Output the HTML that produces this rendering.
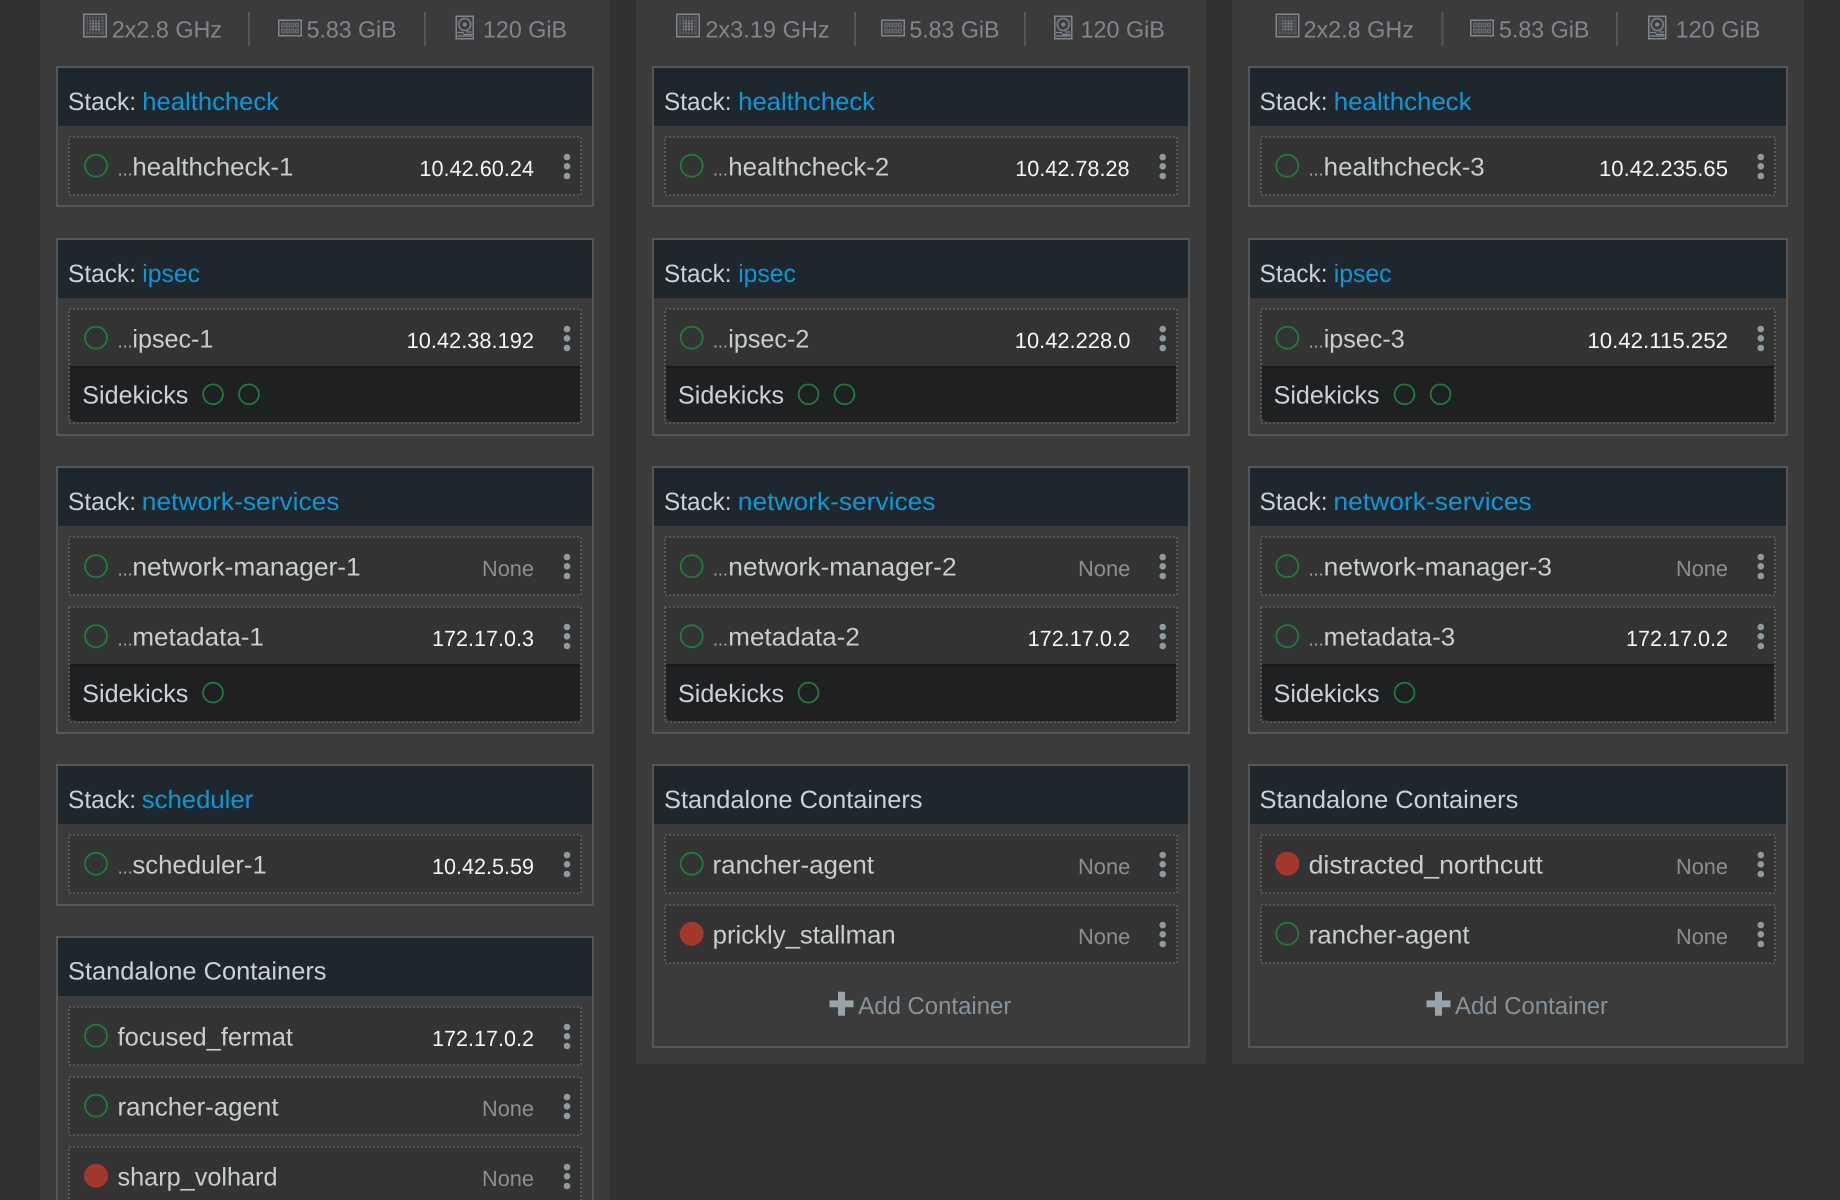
<!DOCTYPE html>
<html lang="en">
<head>
<meta charset="utf-8">
<title>Hosts</title>
<style>
html,body{margin:0;padding:0;background:#313131;width:1840px;height:1200px;overflow:hidden}
svg{display:block;position:absolute;left:0;top:0}
text{font-family:"Liberation Sans",sans-serif;white-space:pre;text-rendering:geometricPrecision}
.t{font-size:25px;fill:#ccd1d3}
.l{font-size:25px;fill:#0a98d8}
.n{font-size:25.5px;fill:#c8cdd0}
.d{font-size:18px;fill:#a9adaf}
.i{font-size:22px;fill:#f4f5f5}
.o{font-size:22px;fill:#8c8e8f}
.s{font-size:23.5px;fill:#80868f}
.a{font-size:24.5px;fill:#87929a}
.box{fill:none;stroke:#565656;stroke-width:2}
.row{fill:#333;stroke:#545454;stroke-width:2;stroke-dasharray:2 2}
.c{fill:none;stroke:#1c7c3a;stroke-width:1.8}
.r{fill:#a3392c}
.h{fill:#1e272e}
.k{fill:#1f2022}
.b{fill:#191a1b}
.v{fill:#565656}
.p{fill:#98a4aa}
</style>
</head>
<body>
<svg width="1840" height="1200" viewBox="0 0 1840 1200" xmlns="http://www.w3.org/2000/svg">
<defs>
<g id="cpu">
<rect x=".75" y=".75" width="22.5" height="22.5" fill="#3f3f3f" stroke="#7f858c" stroke-width="1.5"/>
<rect x="3" y="3" width="18" height="18" fill="#56585b"/>
<rect x="7" y="7" width="10" height="10" fill="#7c8085"/>
<path d="M3 5.5h18M3 8.5h18M3 11.5h18M3 14.5h18M3 17.5h18M5.5 3v18M8.5 3v18M11.5 3v18M14.5 3v18M17.5 3v18" stroke="#3d3e40" stroke-width=".8" fill="none"/>
</g>
<g id="ram">
<rect x=".75" y=".75" width="22.5" height="15.5" fill="#3f3f3f" stroke="#7f858c" stroke-width="1.5"/>
<path d="M3.5 3.5h3.5v4h-3.5zM8.5 3.5h3v4h-3zM13 3.5h3v4h-3zM17.5 3.5h3v4h-3zM3.5 9.5h3.5v4h-3.5zM8.5 9.5h3v4h-3zM13 9.5h3v4h-3zM17.5 9.5h3v4h-3z" fill="#505254" stroke="#6f7379" stroke-width=".8"/>
</g>
<g id="hdd">
<rect x=".75" y=".75" width="17" height="22.5" fill="#3f3f3f" stroke="#7f858c" stroke-width="1.5"/>
<circle cx="9.25" cy="9" r="6" fill="none" stroke="#7f858c" stroke-width="1.4"/>
<circle cx="9.25" cy="9" r="2" fill="#7f858c"/>
<path d="M2 17h5l2 2h7.5M2 20.5h14.5M11 16.5h5" fill="none" stroke="#7f858c" stroke-width="1.2"/>
</g>
<g id="m" fill="#8f9aa0">
<circle cx="0" cy="21" r="3.3"/><circle cx="0" cy="30.3" r="3.3"/><circle cx="0" cy="40" r="3.3"/>
</g>
<path id="plus" d="M8.5 0h7v8.7h8.5v6.8h-8.5v8.5h-7v-8.5h-8.5v-6.8h8.5z" class="p"/>
</defs>

<!-- panels -->
<rect x="40" y="-5" width="570" height="1215" fill="#3b3b3b"/>
<rect x="636" y="-5" width="570" height="1069" rx="3" fill="#3b3b3b"/>
<rect x="1232" y="-5" width="572" height="1069" rx="3" fill="#3b3b3b"/>

<!-- ========== COLUMN 1 ========== -->
<use href="#cpu" x="83" y="13.5"/>
<text class="s" x="111.7" y="37.5" textLength="110.4" lengthAdjust="spacingAndGlyphs">2x2.8 GHz</text>
<rect class="v" x="248" y="12" width="2" height="34"/>
<use href="#ram" x="278" y="19.5"/>
<text class="s" x="306.6" y="37.5" textLength="90" lengthAdjust="spacingAndGlyphs">5.83 GiB</text>
<rect class="v" x="424" y="12" width="2" height="34"/>
<use href="#hdd" x="455.5" y="15.5"/>
<text class="s" x="483" y="37.5" textLength="84" lengthAdjust="spacingAndGlyphs">120 GiB</text>

<!-- healthcheck -->
<rect class="box" x="57" y="67" width="536" height="139"/>
<rect class="h" x="58" y="68" width="534" height="58"/>
<text class="t" x="68" y="110" textLength="68" lengthAdjust="spacingAndGlyphs">Stack:</text>
<text class="l" x="142.3" y="110" textLength="136.7" lengthAdjust="spacingAndGlyphs">healthcheck</text>
<rect class="row" x="69" y="137" width="512" height="58"/>
<circle class="c" cx="96" cy="165.7" r="11"/>
<text class="d" x="117.6" y="175.7" textLength="15" lengthAdjust="spacingAndGlyphs">...</text>
<text class="n" x="132.4" y="175.7" textLength="161" lengthAdjust="spacingAndGlyphs">healthcheck-1</text>
<text class="i" x="419.4" y="176" textLength="114.6" lengthAdjust="spacingAndGlyphs">10.42.60.24</text>
<use href="#m" x="567" y="136"/>

<!-- ipsec -->
<rect class="box" x="57" y="239" width="536" height="196"/>
<rect class="h" x="58" y="240" width="534" height="58"/>
<text class="t" x="68" y="282" textLength="68" lengthAdjust="spacingAndGlyphs">Stack:</text>
<text class="l" x="142.3" y="282" textLength="57.7" lengthAdjust="spacingAndGlyphs">ipsec</text>
<rect class="row" x="69" y="309" width="512" height="114"/>
<circle class="c" cx="96" cy="337.7" r="11"/>
<text class="d" x="117.6" y="347.7" textLength="15" lengthAdjust="spacingAndGlyphs">...</text>
<text class="n" x="132.4" y="347.7" textLength="81" lengthAdjust="spacingAndGlyphs">ipsec-1</text>
<text class="i" x="406.6" y="348" textLength="127.4" lengthAdjust="spacingAndGlyphs">10.42.38.192</text>
<use href="#m" x="567" y="308"/>
<path class="k" d="M70 366H580V422H78Q70 422 70 414Z"/>
<rect class="b" x="70" y="366" width="510" height="2"/>
<text class="t" x="82.3" y="403.6" textLength="106" lengthAdjust="spacingAndGlyphs">Sidekicks</text>
<circle class="c" cx="213" cy="394.3" r="9.9"/>
<circle class="c" cx="249" cy="394.3" r="9.9"/>

<!-- network-services -->
<rect class="box" x="57" y="467" width="536" height="266"/>
<rect class="h" x="58" y="468" width="534" height="58"/>
<text class="t" x="68" y="510" textLength="68" lengthAdjust="spacingAndGlyphs">Stack:</text>
<text class="l" x="141.8" y="510" textLength="197.7" lengthAdjust="spacingAndGlyphs">network-services</text>
<rect class="row" x="69" y="537" width="512" height="58"/>
<circle class="c" cx="96" cy="566.2" r="11"/>
<text class="d" x="117.6" y="575.7" textLength="15" lengthAdjust="spacingAndGlyphs">...</text>
<text class="n" x="132.4" y="575.7" textLength="228.3" lengthAdjust="spacingAndGlyphs">network-manager-1</text>
<text class="o" x="482" y="576" textLength="52" lengthAdjust="spacingAndGlyphs">None</text>
<use href="#m" x="567" y="536"/>
<rect class="row" x="69" y="607" width="512" height="115"/>
<circle class="c" cx="96" cy="636.2" r="11"/>
<text class="d" x="117.6" y="645.7" textLength="15" lengthAdjust="spacingAndGlyphs">...</text>
<text class="n" x="132.4" y="645.7" textLength="131.5" lengthAdjust="spacingAndGlyphs">metadata-1</text>
<text class="i" x="432" y="646" textLength="102" lengthAdjust="spacingAndGlyphs">172.17.0.3</text>
<use href="#m" x="567" y="606"/>
<path class="k" d="M70 664H580V721H78Q70 721 70 713Z"/>
<rect class="b" x="70" y="664" width="510" height="2"/>
<text class="t" x="82.3" y="702" textLength="106" lengthAdjust="spacingAndGlyphs">Sidekicks</text>
<circle class="c" cx="213" cy="692.6" r="9.9"/>

<!-- scheduler -->
<rect class="box" x="57" y="765" width="536" height="140"/>
<rect class="h" x="58" y="766" width="534" height="58"/>
<text class="t" x="68" y="808" textLength="68" lengthAdjust="spacingAndGlyphs">Stack:</text>
<text class="l" x="141.8" y="808" textLength="111.4" lengthAdjust="spacingAndGlyphs">scheduler</text>
<rect class="row" x="69" y="835" width="512" height="58"/>
<circle class="c" cx="96" cy="863.7" r="11"/>
<text class="d" x="117.6" y="873.7" textLength="15" lengthAdjust="spacingAndGlyphs">...</text>
<text class="n" x="132.4" y="873.7" textLength="134.4" lengthAdjust="spacingAndGlyphs">scheduler-1</text>
<text class="i" x="432" y="874" textLength="102" lengthAdjust="spacingAndGlyphs">10.42.5.59</text>
<use href="#m" x="567" y="834"/>

<!-- standalone col 1 -->
<rect class="box" x="57" y="937" width="536" height="400"/>
<rect class="h" x="58" y="938" width="534" height="58"/>
<text class="t" x="68" y="979.3" textLength="258.5" lengthAdjust="spacingAndGlyphs">Standalone Containers</text>
<rect class="row" x="69" y="1007" width="512" height="58"/>
<circle class="c" cx="96" cy="1035.7" r="11"/>
<text class="n" x="117.5" y="1045.7" textLength="175.5" lengthAdjust="spacingAndGlyphs">focused_fermat</text>
<text class="i" x="432" y="1046" textLength="102" lengthAdjust="spacingAndGlyphs">172.17.0.2</text>
<use href="#m" x="567" y="1006"/>
<rect class="row" x="69" y="1077" width="512" height="58"/>
<circle class="c" cx="96" cy="1105.7" r="11"/>
<text class="n" x="117.5" y="1115.7" textLength="161" lengthAdjust="spacingAndGlyphs">rancher-agent</text>
<text class="o" x="482" y="1116" textLength="52" lengthAdjust="spacingAndGlyphs">None</text>
<use href="#m" x="567" y="1076"/>
<rect class="row" x="69" y="1147" width="512" height="100"/>
<circle class="r" cx="96" cy="1175.7" r="12"/>
<text class="n" x="117.5" y="1185.7" textLength="160" lengthAdjust="spacingAndGlyphs">sharp_volhard</text>
<text class="o" x="482" y="1186" textLength="52" lengthAdjust="spacingAndGlyphs">None</text>
<use href="#m" x="567" y="1146"/>

<!-- ========== COLUMN 2 ========== -->
<use href="#cpu" x="676" y="13.5"/>
<text class="s" x="705.3" y="37.5" textLength="124.4" lengthAdjust="spacingAndGlyphs">2x3.19 GHz</text>
<rect class="v" x="854" y="12" width="2" height="34"/>
<use href="#ram" x="881" y="19.5"/>
<text class="s" x="909.4" y="37.5" textLength="90" lengthAdjust="spacingAndGlyphs">5.83 GiB</text>
<rect class="v" x="1024" y="12" width="2" height="34"/>
<use href="#hdd" x="1054" y="15.5"/>
<text class="s" x="1080.5" y="37.5" textLength="84.4" lengthAdjust="spacingAndGlyphs">120 GiB</text>

<rect class="box" x="653" y="67" width="536" height="139"/>
<rect class="h" x="654" y="68" width="534" height="58"/>
<text class="t" x="664" y="110" textLength="67.5" lengthAdjust="spacingAndGlyphs">Stack:</text>
<text class="l" x="738.2" y="110" textLength="136.8" lengthAdjust="spacingAndGlyphs">healthcheck</text>
<rect class="row" x="665" y="137" width="512" height="58"/>
<circle class="c" cx="691.7" cy="165.7" r="11"/>
<text class="d" x="712.9" y="175.7" textLength="15" lengthAdjust="spacingAndGlyphs">...</text>
<text class="n" x="728.3" y="175.7" textLength="161" lengthAdjust="spacingAndGlyphs">healthcheck-2</text>
<text class="i" x="1015.2" y="176" textLength="114.4" lengthAdjust="spacingAndGlyphs">10.42.78.28</text>
<use href="#m" x="1162.7" y="136"/>

<rect class="box" x="653" y="239" width="536" height="196"/>
<rect class="h" x="654" y="240" width="534" height="58"/>
<text class="t" x="664" y="282" textLength="67.5" lengthAdjust="spacingAndGlyphs">Stack:</text>
<text class="l" x="738.2" y="282" textLength="57.7" lengthAdjust="spacingAndGlyphs">ipsec</text>
<rect class="row" x="665" y="309" width="512" height="114"/>
<circle class="c" cx="691.7" cy="337.7" r="11"/>
<text class="d" x="712.9" y="347.7" textLength="15" lengthAdjust="spacingAndGlyphs">...</text>
<text class="n" x="728.3" y="347.7" textLength="81" lengthAdjust="spacingAndGlyphs">ipsec-2</text>
<text class="i" x="1014.8" y="348" textLength="115.6" lengthAdjust="spacingAndGlyphs">10.42.228.0</text>
<use href="#m" x="1162.7" y="308"/>
<path class="k" d="M666 366H1176V422H674Q666 422 666 414Z"/>
<rect class="b" x="666" y="366" width="510" height="2"/>
<text class="t" x="678" y="403.6" textLength="106" lengthAdjust="spacingAndGlyphs">Sidekicks</text>
<circle class="c" cx="808.5" cy="394.3" r="9.9"/>
<circle class="c" cx="844.5" cy="394.3" r="9.9"/>

<rect class="box" x="653" y="467" width="536" height="266"/>
<rect class="h" x="654" y="468" width="534" height="58"/>
<text class="t" x="664" y="510" textLength="67.5" lengthAdjust="spacingAndGlyphs">Stack:</text>
<text class="l" x="737.8" y="510" textLength="197.7" lengthAdjust="spacingAndGlyphs">network-services</text>
<rect class="row" x="665" y="537" width="512" height="58"/>
<circle class="c" cx="691.7" cy="566.2" r="11"/>
<text class="d" x="712.9" y="575.7" textLength="15" lengthAdjust="spacingAndGlyphs">...</text>
<text class="n" x="728.3" y="575.7" textLength="228.3" lengthAdjust="spacingAndGlyphs">network-manager-2</text>
<text class="o" x="1078" y="576" textLength="52.3" lengthAdjust="spacingAndGlyphs">None</text>
<use href="#m" x="1162.7" y="536"/>
<rect class="row" x="665" y="607" width="512" height="115"/>
<circle class="c" cx="691.7" cy="636.2" r="11"/>
<text class="d" x="712.9" y="645.7" textLength="15" lengthAdjust="spacingAndGlyphs">...</text>
<text class="n" x="728.3" y="645.7" textLength="131.5" lengthAdjust="spacingAndGlyphs">metadata-2</text>
<text class="i" x="1027.6" y="646" textLength="102.4" lengthAdjust="spacingAndGlyphs">172.17.0.2</text>
<use href="#m" x="1162.7" y="606"/>
<path class="k" d="M666 664H1176V721H674Q666 721 666 713Z"/>
<rect class="b" x="666" y="664" width="510" height="2"/>
<text class="t" x="678" y="702" textLength="106" lengthAdjust="spacingAndGlyphs">Sidekicks</text>
<circle class="c" cx="808.5" cy="692.6" r="9.9"/>

<rect class="box" x="653" y="765" width="536" height="282"/>
<rect class="h" x="654" y="766" width="534" height="58"/>
<text class="t" x="664" y="808" textLength="258.5" lengthAdjust="spacingAndGlyphs">Standalone Containers</text>
<rect class="row" x="665" y="835" width="512" height="58"/>
<circle class="c" cx="691.7" cy="863.7" r="11"/>
<text class="n" x="712.5" y="873.7" textLength="161.5" lengthAdjust="spacingAndGlyphs">rancher-agent</text>
<text class="o" x="1078" y="874" textLength="52.3" lengthAdjust="spacingAndGlyphs">None</text>
<use href="#m" x="1162.7" y="834"/>
<rect class="row" x="665" y="905" width="512" height="58"/>
<circle class="r" cx="691.7" cy="933.7" r="12"/>
<text class="n" x="712.7" y="943.7" textLength="183" lengthAdjust="spacingAndGlyphs">prickly_stallman</text>
<text class="o" x="1078" y="944" textLength="52.3" lengthAdjust="spacingAndGlyphs">None</text>
<use href="#m" x="1162.7" y="904"/>
<use href="#plus" x="829.5" y="991.7"/>
<text class="a" x="858.3" y="1014" textLength="153" lengthAdjust="spacingAndGlyphs">Add Container</text>

<!-- ========== COLUMN 3 ========== -->
<use href="#cpu" x="1275.5" y="13.5"/>
<text class="s" x="1303.5" y="37.5" textLength="110.4" lengthAdjust="spacingAndGlyphs">2x2.8 GHz</text>
<rect class="v" x="1441.5" y="12" width="2" height="34"/>
<use href="#ram" x="1470" y="19.5"/>
<text class="s" x="1499" y="37.5" textLength="90.4" lengthAdjust="spacingAndGlyphs">5.83 GiB</text>
<rect class="v" x="1616" y="12" width="2" height="34"/>
<use href="#hdd" x="1648" y="15.5"/>
<text class="s" x="1675.5" y="37.5" textLength="85" lengthAdjust="spacingAndGlyphs">120 GiB</text>

<rect class="box" x="1249" y="67" width="538" height="139"/>
<rect class="h" x="1250" y="68" width="536" height="58"/>
<text class="t" x="1259.5" y="110" textLength="68" lengthAdjust="spacingAndGlyphs">Stack:</text>
<text class="l" x="1333.8" y="110" textLength="137.7" lengthAdjust="spacingAndGlyphs">healthcheck</text>
<rect class="row" x="1261" y="137" width="514" height="58"/>
<circle class="c" cx="1287.3" cy="165.7" r="11"/>
<text class="d" x="1308.6" y="175.7" textLength="15" lengthAdjust="spacingAndGlyphs">...</text>
<text class="n" x="1323.7" y="175.7" textLength="161" lengthAdjust="spacingAndGlyphs">healthcheck-3</text>
<text class="i" x="1599" y="176" textLength="129" lengthAdjust="spacingAndGlyphs">10.42.235.65</text>
<use href="#m" x="1760.8" y="136"/>

<rect class="box" x="1249" y="239" width="538" height="196"/>
<rect class="h" x="1250" y="240" width="536" height="58"/>
<text class="t" x="1259.5" y="282" textLength="68" lengthAdjust="spacingAndGlyphs">Stack:</text>
<text class="l" x="1333.8" y="282" textLength="57.7" lengthAdjust="spacingAndGlyphs">ipsec</text>
<rect class="row" x="1261" y="309" width="514" height="114"/>
<circle class="c" cx="1287.3" cy="337.7" r="11"/>
<text class="d" x="1308.6" y="347.7" textLength="15" lengthAdjust="spacingAndGlyphs">...</text>
<text class="n" x="1323.7" y="347.7" textLength="81" lengthAdjust="spacingAndGlyphs">ipsec-3</text>
<text class="i" x="1587.4" y="348" textLength="140.6" lengthAdjust="spacingAndGlyphs">10.42.115.252</text>
<use href="#m" x="1760.8" y="308"/>
<path class="k" d="M1262 366H1774V422H1270Q1262 422 1262 414Z"/>
<rect class="b" x="1262" y="366" width="512" height="2"/>
<text class="t" x="1273.6" y="403.6" textLength="106" lengthAdjust="spacingAndGlyphs">Sidekicks</text>
<circle class="c" cx="1404.5" cy="394.3" r="9.9"/>
<circle class="c" cx="1440.5" cy="394.3" r="9.9"/>

<rect class="box" x="1249" y="467" width="538" height="266"/>
<rect class="h" x="1250" y="468" width="536" height="58"/>
<text class="t" x="1259.5" y="510" textLength="68" lengthAdjust="spacingAndGlyphs">Stack:</text>
<text class="l" x="1333.4" y="510" textLength="198.4" lengthAdjust="spacingAndGlyphs">network-services</text>
<rect class="row" x="1261" y="537" width="514" height="58"/>
<circle class="c" cx="1287.3" cy="566.2" r="11"/>
<text class="d" x="1308.6" y="575.7" textLength="15" lengthAdjust="spacingAndGlyphs">...</text>
<text class="n" x="1323.7" y="575.7" textLength="228.3" lengthAdjust="spacingAndGlyphs">network-manager-3</text>
<text class="o" x="1676" y="576" textLength="52" lengthAdjust="spacingAndGlyphs">None</text>
<use href="#m" x="1760.8" y="536"/>
<rect class="row" x="1261" y="607" width="514" height="115"/>
<circle class="c" cx="1287.3" cy="636.2" r="11"/>
<text class="d" x="1308.6" y="645.7" textLength="15" lengthAdjust="spacingAndGlyphs">...</text>
<text class="n" x="1323.7" y="645.7" textLength="131.5" lengthAdjust="spacingAndGlyphs">metadata-3</text>
<text class="i" x="1626" y="646" textLength="102" lengthAdjust="spacingAndGlyphs">172.17.0.2</text>
<use href="#m" x="1760.8" y="606"/>
<path class="k" d="M1262 664H1774V721H1270Q1262 721 1262 713Z"/>
<rect class="b" x="1262" y="664" width="512" height="2"/>
<text class="t" x="1273.6" y="702" textLength="106" lengthAdjust="spacingAndGlyphs">Sidekicks</text>
<circle class="c" cx="1404.5" cy="692.6" r="9.9"/>

<rect class="box" x="1249" y="765" width="538" height="282"/>
<rect class="h" x="1250" y="766" width="536" height="58"/>
<text class="t" x="1259.5" y="808" textLength="258.8" lengthAdjust="spacingAndGlyphs">Standalone Containers</text>
<rect class="row" x="1261" y="835" width="514" height="58"/>
<circle class="r" cx="1287.3" cy="863.7" r="12"/>
<text class="n" x="1308.6" y="873.7" textLength="234.3" lengthAdjust="spacingAndGlyphs">distracted_northcutt</text>
<text class="o" x="1676" y="874" textLength="52" lengthAdjust="spacingAndGlyphs">None</text>
<use href="#m" x="1760.8" y="834"/>
<rect class="row" x="1261" y="905" width="514" height="58"/>
<circle class="c" cx="1287.3" cy="933.7" r="11"/>
<text class="n" x="1308.6" y="943.7" textLength="161" lengthAdjust="spacingAndGlyphs">rancher-agent</text>
<text class="o" x="1676" y="944" textLength="52" lengthAdjust="spacingAndGlyphs">None</text>
<use href="#m" x="1760.8" y="904"/>
<use href="#plus" x="1426.5" y="991.7"/>
<text class="a" x="1455" y="1014" textLength="153" lengthAdjust="spacingAndGlyphs">Add Container</text>
</svg>
</body>
</html>
